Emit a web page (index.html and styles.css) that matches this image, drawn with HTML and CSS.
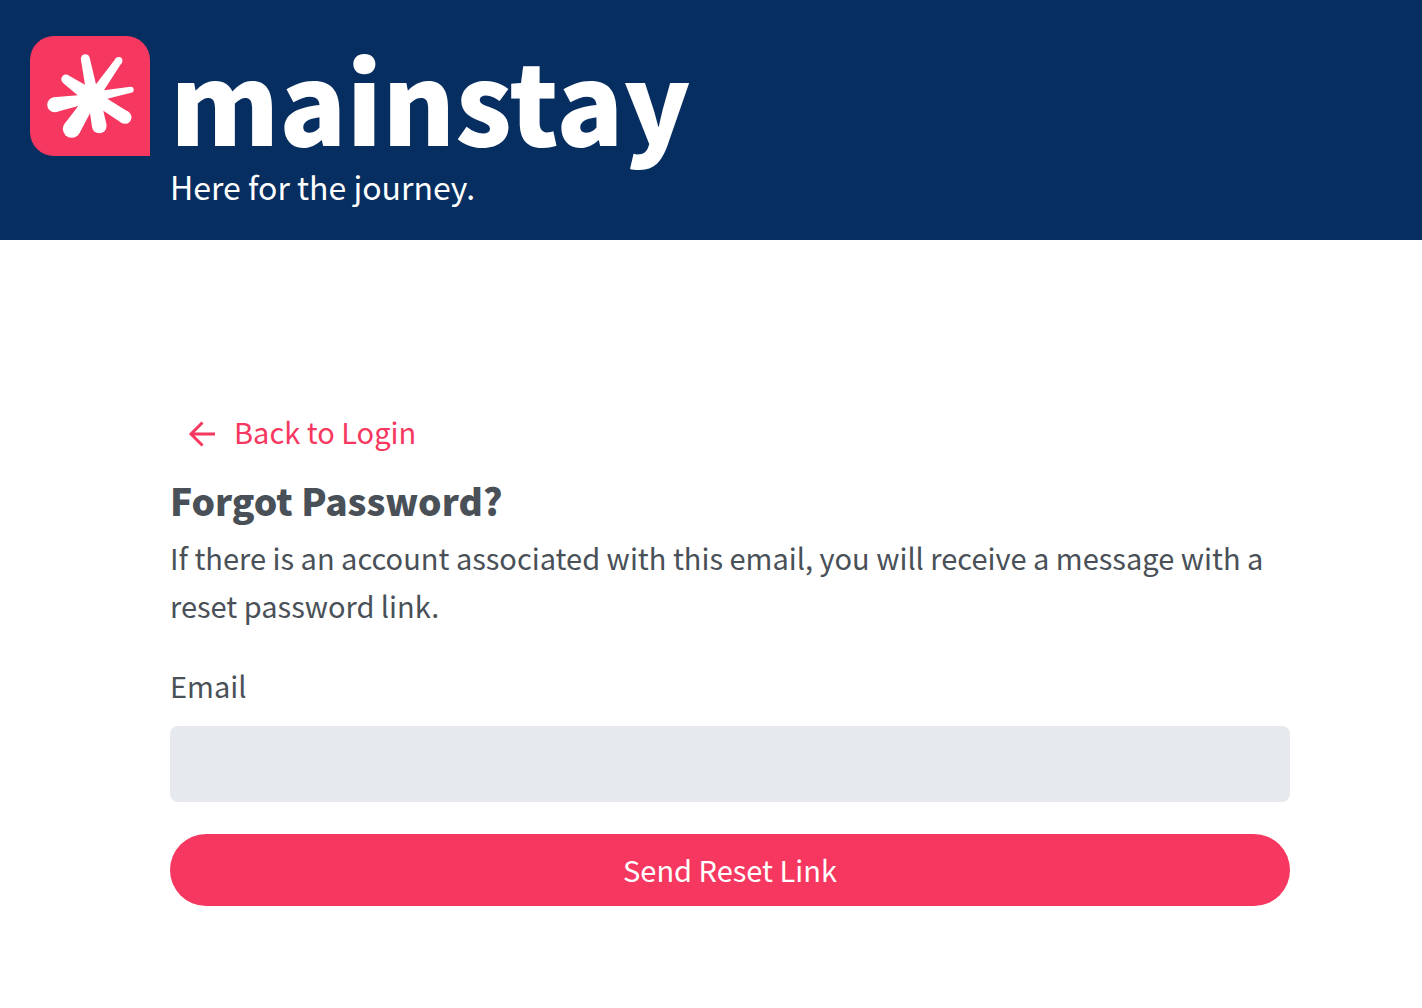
FILE: index.html
```html
<!DOCTYPE html>
<html lang="en">
<head>
<meta charset="utf-8">
<meta name="viewport" content="width=device-width, initial-scale=1">
<title>Forgot Password | mainstay</title>
<link rel="stylesheet" href="styles.css">
</head>
<body>
<header class="site-header">
  <svg class="logo" viewBox="0 0 120 120" aria-hidden="true">
    <path fill="#f63760" d="M24 0H96A24 24 0 0 1 120 24V120H24A24 24 0 0 1 0 96V24A24 24 0 0 1 24 0Z"/>
    <g fill="#fff">
      <path d="M55 48.7L50.9 23.5L59.7 22L66 48.3L85.7 22.6L91.7 26.8L74 54.3L100.3 50.7L101.1 56.7L77.3 62.7L98.6 75.9L91.4 86.7L73.3 74.7L76.5 88.6L62.1 91.4L60 77.3L49.2 97.7L34.2 88.3L48.3 70L26 76.1L23.4 61.3L47.7 59.3L33.3 47.2L38.7 39.4Z"/>
      <circle cx="55.3" cy="22.7" r="4.5"/>
      <circle cx="88.7" cy="24.7" r="3.7"/>
      <circle cx="100.7" cy="53.7" r="3"/>
      <circle cx="95" cy="81.3" r="6.5"/>
      <circle cx="69.3" cy="90" r="7.3"/>
      <circle cx="41.7" cy="93" r="8.8"/>
      <circle cx="24.7" cy="68.7" r="7.5"/>
      <circle cx="36" cy="43.3" r="4.7"/>
    </g>
  </svg>
  <div class="brand">
    <span class="brand-name">mainstay</span>
    <span class="brand-tagline">Here for the journey.</span>
  </div>
</header>
<main class="content">
  <a class="back-link" href="#login">
    <svg class="back-icon" viewBox="0 0 28 28" aria-hidden="true"><path d="M27 14H4M14.5 2.5L3 14L14.5 25.5" fill="none" stroke="currentColor" stroke-width="3"/></svg>
    Back to Login
  </a>
  <h1 class="title">Forgot Password?</h1>
  <p class="description">If there is an account associated with this email, you will receive a message with a reset password link.</p>
  <form class="reset-form">
    <label class="label" for="email">Email</label>
    <input class="input" id="email" type="email" name="email">
    <button class="submit" type="submit">Send Reset Link</button>
  </form>
</main>
</body>
</html>
```
FILE: styles.css
```css
* {
  box-sizing: border-box;
}

body {
  margin: 0;
  background: #fff;
  color: #495057;
  font-family: "Noto Sans CJK SC", "Noto Sans", sans-serif;
  font-size: 29px;
  line-height: 48px;
}

.site-header {
  display: flex;
  align-items: flex-start;
  gap: 20px;
  padding: 36px 30px 30px;
  background: #072e60;
  color: #fff;
}

.logo {
  flex: none;
  width: 120px;
  height: 120px;
}

.brand {
  display: flex;
  flex-direction: column;
  gap: 2px;
}

.brand-name {
  font-size: 111px;
  font-weight: 900;
  line-height: 124px;
}

.brand-tagline {
  font-size: 32px;
  line-height: 48px;
}

.content {
  padding: 174px 132px 100px 170px;
}

.back-link {
  display: flex;
  align-items: flex-end;
  gap: 18px;
  width: fit-content;
  padding: 0 18px;
  color: #f63760;
  line-height: 34px;
  text-decoration: none;
}

.back-icon {
  width: 28px;
  height: 28px;
}

.title {
  margin: 26px 0 7px;
  font-size: 37px;
  font-weight: 900;
  line-height: 52px;
}

.description {
  margin: 0 0 32px;
}

.reset-form {
  display: flex;
  flex-direction: column;
}

.label {
  margin-bottom: 17px;
}

.input {
  width: 100%;
  height: 76px;
  margin-bottom: 32px;
  padding: 0 24px;
  border: 0;
  border-radius: 8px;
  background: #e6e9ee;
  color: inherit;
  font: inherit;
}

.submit {
  height: 72px;
  padding: 0 24px 2px;
  border: 0;
  border-radius: 36px;
  background: #f63760;
  color: #fff;
  font: inherit;
  cursor: pointer;
}
```
